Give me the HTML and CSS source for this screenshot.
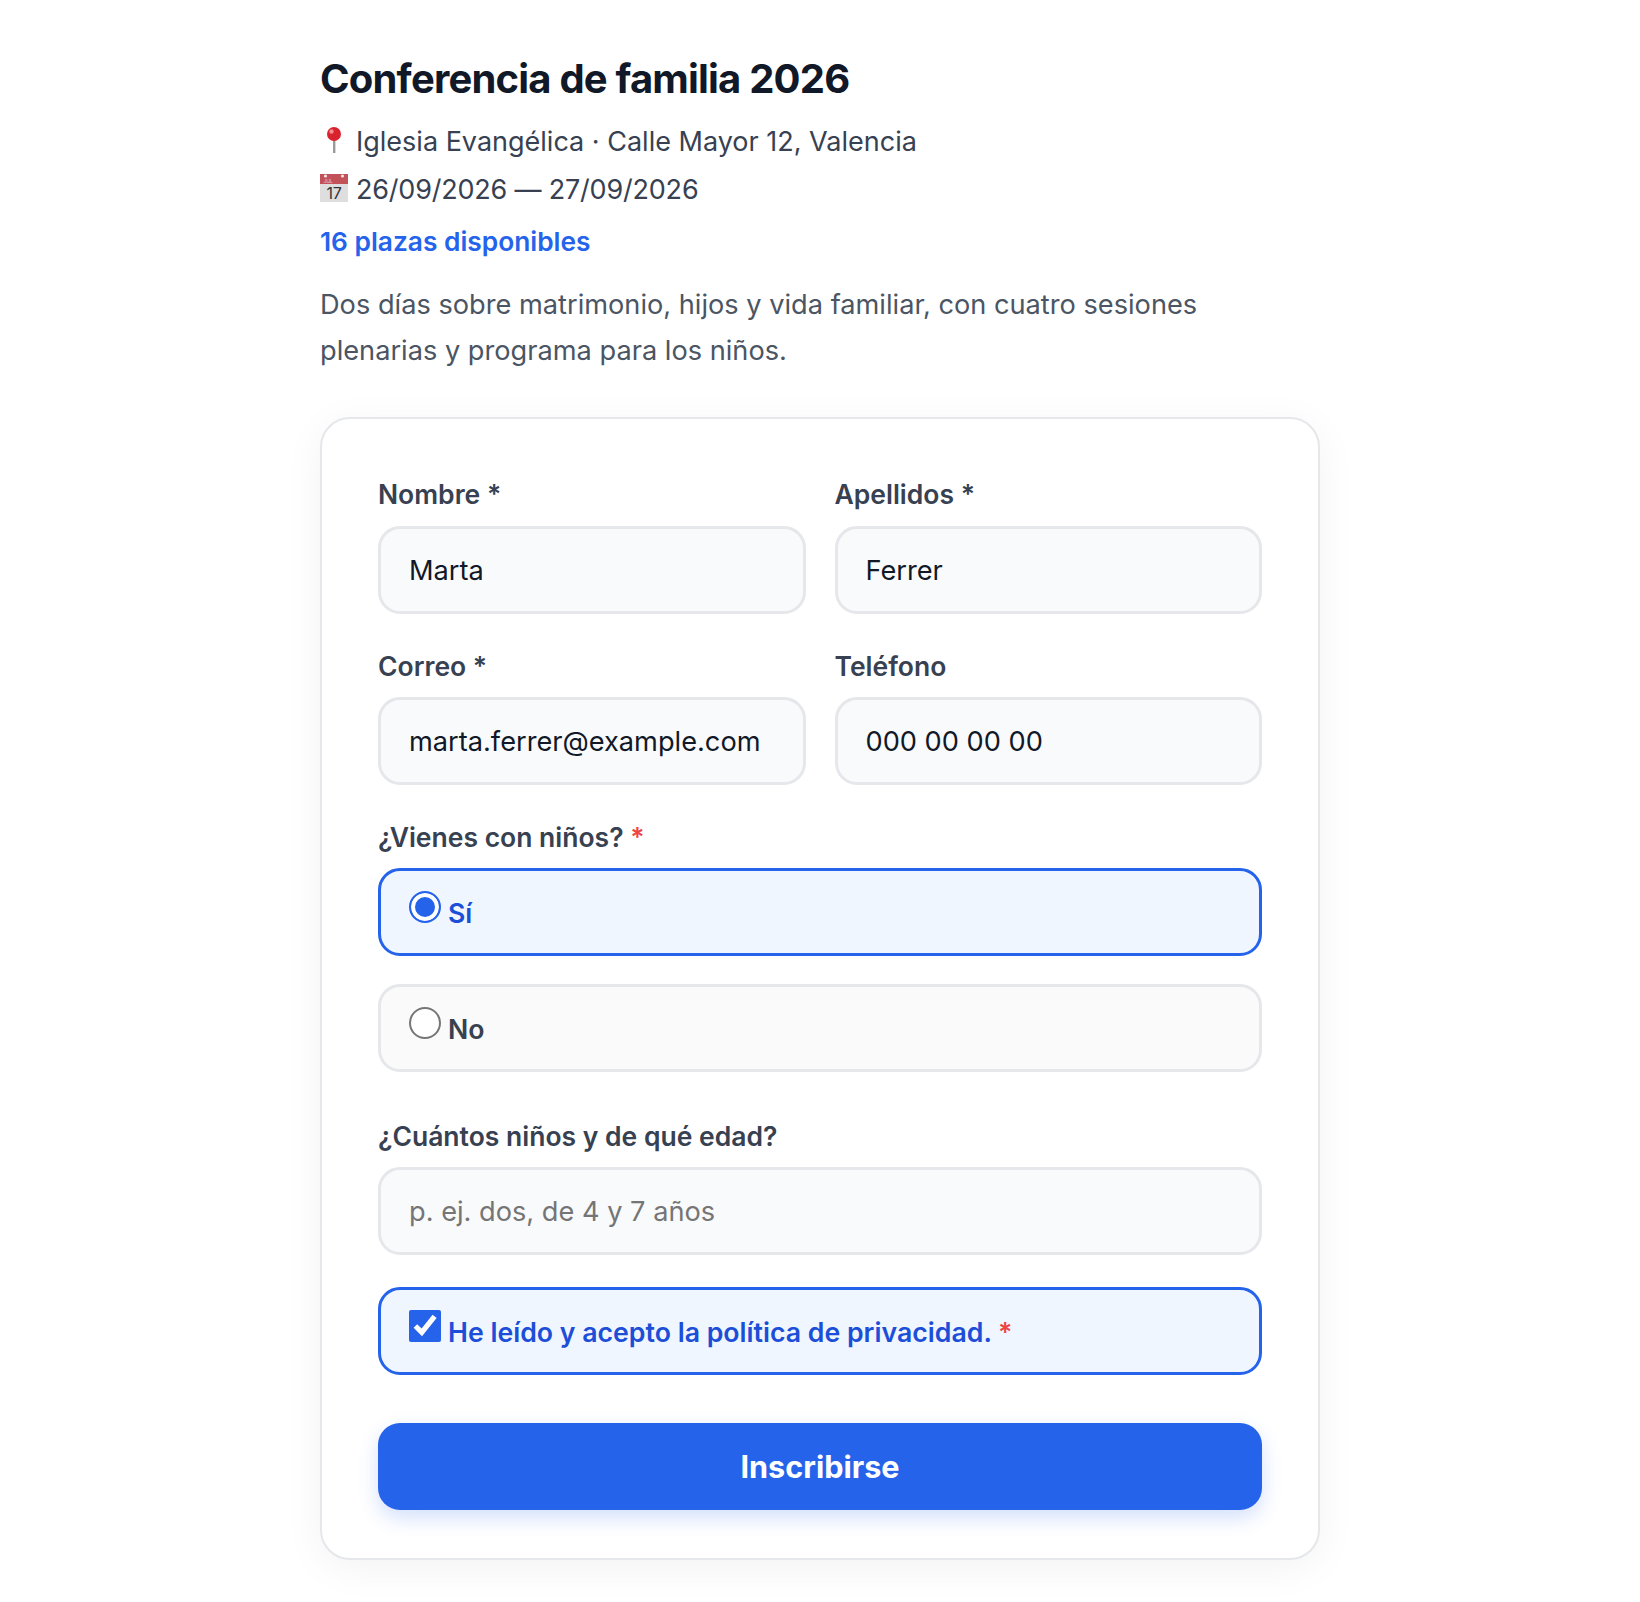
FILE: index.html
```html
<!DOCTYPE html>
<html lang="es">
<head>
  <meta charset="UTF-8" />
  <title>Conferencia de familia 2026</title>
  <link rel="stylesheet" href="styles.css">
</head>
<body>

<main class="page">
  <h1>Conferencia de familia 2026</h1>
  <p class="meta"><svg class="emoji" viewBox="0 0 28 28"><rect x="13" y="12" width="2.4" height="15" fill="#9a9a9a"/><circle cx="14" cy="8" r="7" fill="#d8232f"/><circle cx="11.5" cy="5.5" r="2.2" fill="#f28a8f"/></svg>Iglesia Evangélica · Calle Mayor 12, Valencia</p>
  <p class="meta dates"><svg class="emoji" viewBox="0 0 28 28"><rect y="0" width="28" height="28" fill="#dedede"/><rect y="0" width="28" height="10" fill="#c2515a"/><circle cx="5.500" cy="2" r="1.600" fill="#f4e6e6"/><circle cx="22.500" cy="2" r="1.600" fill="#f4e6e6"/><text x="3.500" y="8.500" class="emoji-month">JUL</text><text x="14" y="25" text-anchor="middle" class="emoji-day">17</text></svg>26/09/2026 — 27/09/2026</p>
  <p class="spots">16 plazas disponibles</p>
  <p class="desc">Dos días sobre matrimonio, hijos y vida familiar, con cuatro sesiones plenarias y programa para los niños.</p>

  <form class="card">
    <div class="row first">
      <div class="field">
        <label>Nombre *</label>
        <input type="text" value="Marta">
      </div>
      <div class="field">
        <label>Apellidos *</label>
        <input type="text" value="Ferrer">
      </div>
    </div>
    <div class="row">
      <div class="field">
        <label>Correo *</label>
        <input type="email" value="marta.ferrer@example.com">
      </div>
      <div class="field">
        <label>Teléfono</label>
        <input type="tel" value="000 00 00 00">
      </div>
    </div>

    <div class="group">
      <p class="group-label">¿Vienes con niños? <span class="req">*</span></p>
      <label class="option selected"><input type="radio" name="kids" checked>Sí</label>
      <label class="option"><input type="radio" name="kids">No</label>
    </div>

    <div class="field kids">
      <label>¿Cuántos niños y de qué edad?</label>
      <input type="text" placeholder="p. ej. dos, de 4 y 7 años">
    </div>

    <label class="option selected consent"><input type="checkbox" checked>He leído y acepto la política de privacidad. <span class="req">*</span></label>

    <button type="button" class="submit">Inscribirse</button>
  </form>
</main>

</body>
</html>
```

FILE: styles.css
```css
* {
  box-sizing: border-box;
}
body {
  font-family: Inter, "Noto Sans", sans-serif;
  margin: 0;
  background: #fff;
  color: #374151;
}
.page {
  width: 1000px;
  margin: 0 0 0 320px;
  padding: 53px 0 43px;
}
h1 {
  margin: 0 0 13px;
  font-size: 40px;
  line-height: 52px;
  font-weight: 700;
  letter-spacing: -0.8px;
  color: #111827;
}
.meta {
  margin: 0;
  font-size: 27px;
  line-height: 48px;
  color: #374151;
}
.dates {
  letter-spacing: -0.2px;
}
.emoji {
  width: 28px;
  height: 28px;
  margin-right: 8px;
  vertical-align: -3px;
}
.emoji-day {
  font-family: Inter, sans-serif;
  font-size: 16px;
  fill: #333;
}
.emoji-month {
  font-family: Inter, sans-serif;
  font-size: 5px;
  fill: #f0c8cb;
}
.spots {
  margin: 4px 0 0;
  font-size: 26.3px;
  line-height: 48px;
  font-weight: 600;
  color: #2563eb;
}
.desc {
  margin: 16px 0 0;
  font-size: 27.2px;
  line-height: 46px;
  color: #4b5563;
}
.card {
  margin-top: 43px;
  padding: 59px 56px 48px;
  background: #fff;
  border: 2px solid #e5e7eb;
  border-radius: 30px;
  box-shadow: 0 8px 40px rgba(0, 0, 0, 0.05);
}
.row {
  display: grid;
  grid-template-columns: 1fr 1fr;
  gap: 29px;
  margin-bottom: 36px;
}
.field label, .group-label {
  display: block;
  margin: 0 0 15px;
  font-size: 26.5px;
  line-height: 32px;
  font-weight: 600;
  color: #374151;
}
.first .field label {
  margin-bottom: 16px;
}
.field input {
  display: block;
  width: 100%;
  height: 88px;
  padding: 0 28px;
  font-family: inherit;
  font-size: 27.2px;
  color: #111827;
  background: #f9fafb;
  border: 3px solid #e5e7eb;
  border-radius: 22px;
  outline: none;
}
.field input::placeholder {
  color: #757575;
}
.req {
  color: #ef4444;
}
.option {
  display: block;
  height: 88px;
  margin-bottom: 28px;
  padding: 20px 28px 0;
  font-size: 26.7px;
  line-height: 40px;
  font-weight: 600;
  color: #374151;
  background: #fafafa;
  border: 3px solid #e5e7eb;
  border-radius: 22px;
}
.option input {
  width: 32px;
  height: 32px;
  margin: 0 7px 0 0;
  accent-color: #2563eb;
}
.option input[type="radio"] {
  appearance: none;
  background: #fff;
  border: 2px solid #767676;
  border-radius: 50%;
}
.option input[type="radio"]:checked {
  background: #2563eb;
  border-color: #2563eb;
  box-shadow: inset 0 0 0 4px #fff;
}
.option.selected {
  color: #1d4ed8;
  background: #eff6ff;
  border-color: #2563eb;
}
.kids {
  margin-top: 48px;
}
.consent {
  margin: 32px 0 0;
}
.submit {
  display: block;
  width: 100%;
  height: 87px;
  margin-top: 48px;
  font-family: inherit;
  font-size: 30.6px;
  font-weight: 700;
  color: #fff;
  background: #2563eb;
  border: none;
  border-radius: 22px;
  box-shadow: 0 8px 20px rgba(37, 99, 235, 0.2);
}
```
